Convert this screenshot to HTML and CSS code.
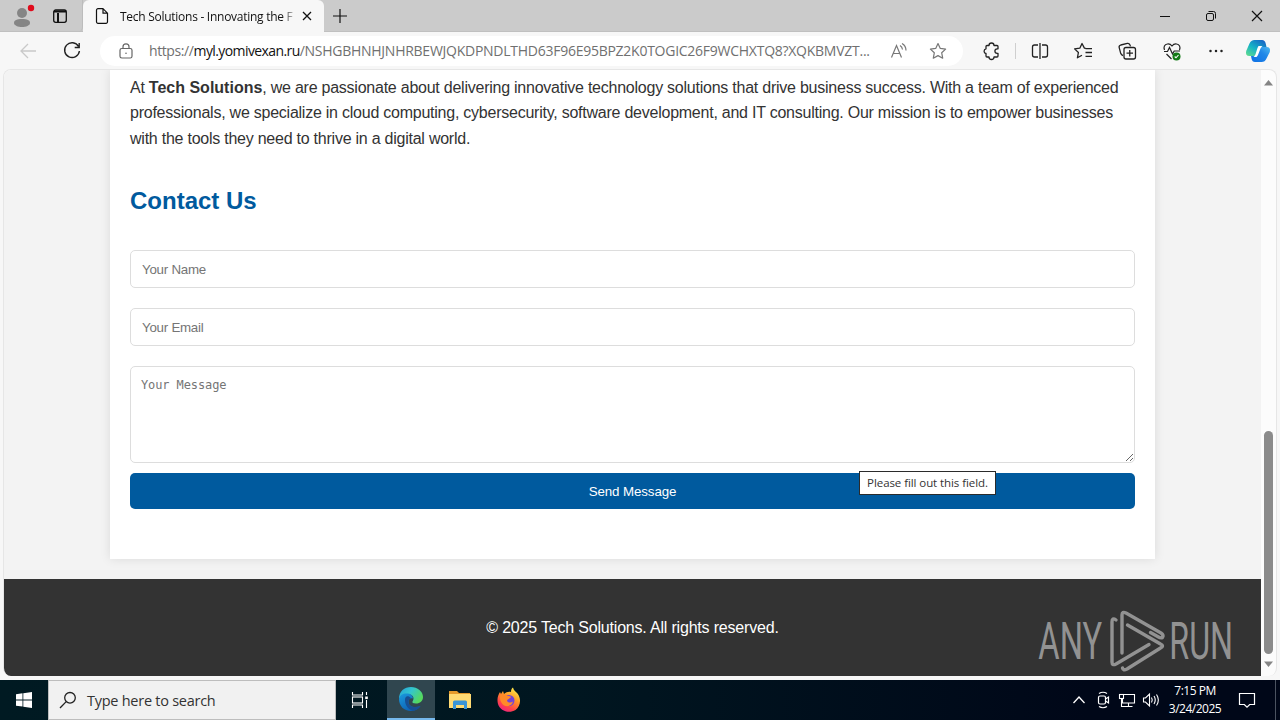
FILE: index.html
```html
<!DOCTYPE html>
<html lang="en">
<head>
    <meta charset="UTF-8">
    <meta name="viewport" content="width=device-width, initial-scale=1.0">
    <title>Tech Solutions - Innovating the Future</title>
    <link rel="stylesheet" href="styles.css">
</head>
<body>

    <!-- Tab strip -->
    <div class="tabstrip">
        <div class="tab-left">
            <svg width="30" height="32" viewBox="0 0 30 32">
                <circle cx="14" cy="13" r="5" fill="#858585"/>
                <path d="M6 23c0-3 3-4 8-4s8 1 8 4c0 2.500-4 4-8 4s-8-1.500-8-4z" fill="#858585"/>
                <circle cx="23" cy="8" r="3.200" fill="#e00b1c"/>
            </svg>
            <svg class="workspaces" width="16" height="16" viewBox="0 0 16 16" fill="none" stroke="#111" stroke-width="1.300">
                <rect x="1.700" y="2" width="12.600" height="12.300" rx="2"/>
                <path d="M2 3.500h12M6 5v9" stroke-width="2"/>
            </svg>
        </div>
        <div class="tab">
            <svg width="14" height="16" viewBox="0 0 14 16" fill="none" stroke="#111" stroke-width="1.200">
                <path d="M8 .7H3a1.500 1.500 0 0 0-1.500 1.500v11.600a1.500 1.500 0 0 0 1.500 1.500h8a1.500 1.500 0 0 0 1.500-1.500V5.200L8 .7v4.500h4.500"/>
            </svg>
            <span class="tab-title">Tech Solutions - Innovating the F</span>
            <svg width="10" height="10" viewBox="0 0 10 10" stroke="#111" stroke-width="1.300"><path d="M1 1l8 8M9 1L1 9"/></svg>
        </div>
        <svg class="plus" width="14" height="14" viewBox="0 0 14 14" stroke="#111" stroke-width="1.200"><path d="M7 0v14M0 7h14"/></svg>
        <div class="window-buttons">
            <svg width="46" height="32" viewBox="0 0 46 32" stroke="#111"><path d="M18 16.500h10"/></svg>
            <svg width="46" height="32" viewBox="0 0 46 32" fill="none" stroke="#111">
                <rect x="18.500" y="13.500" width="7" height="7" rx="1.500"/>
                <path d="M20.500 11.500h5a2 2 0 0 1 2 2v5"/>
            </svg>
            <svg width="46" height="32" viewBox="0 0 46 32" stroke="#111" stroke-width="1.200"><path d="M18 11l10 10M28 11L18 21"/></svg>
        </div>
    </div>

    <!-- Toolbar -->
    <div class="toolbar">
        <svg class="tool" viewBox="0 0 44 38" fill="none" stroke="#c9c9c9" stroke-width="1.300"><path d="M30 19H15M22 12l-7 7 7 7"/></svg>
        <svg class="tool" viewBox="0 0 44 38" fill="none" stroke="#222" stroke-width="1.400">
            <path d="M28.500 14.500A7.400 7.400 0 1 0 29.400 19M29.200 11v4.500h-4.500"/>
        </svg>
        <div class="address">
            <svg width="14" height="16" viewBox="0 0 14 16" fill="none" stroke="#666" stroke-width="1.200">
                <rect x="1" y="5.500" width="12" height="9.500" rx="1.800"/>
                <path d="M4 5.500V3.800a3 3 0 0 1 6 0v1.700"/>
                <circle cx="7" cy="10.200" r=".8" fill="#666" stroke="none"/>
            </svg>
            <span class="url"><span class="scheme">https://</span><b>myl.yomivexan.ru</b>/NSHGBHNHJNHRBEWJQKDPNDLTHD63F96E95BPZ2K0TOGIC26F9WCHXTQ8?XQKBMVZT...</span>
            <svg width="18" height="18" viewBox="0 0 18 18" fill="none" stroke="#777" stroke-width="1.200">
                <path d="M1.500 15.500L6.500 3.500l5 12M3.300 11.500h6.500M10 3.500q2.200 1.300 2.500 4M12 1.500q4 2.200 4 7"/>
            </svg>
            <svg class="star" width="18" height="18" viewBox="0 0 18 18" fill="none" stroke="#777" stroke-width="1.200" stroke-linejoin="round">
                <path d="M9 1.500l2.300 4.900 5.300.7-3.900 3.700 1 5.400L9 13.600l-4.700 2.600 1-5.400-3.900-3.700 5.300-.7z"/>
            </svg>
        </div>
        <svg class="tool ext" viewBox="0 0 44 38" fill="none" stroke="#222" stroke-width="1.300" stroke-linejoin="round">
            <path d="M20 13.500a2.500 2.500 0 0 1 5 0h3q1 0 1 1v2.300h-.8a2.300 2.300 0 0 0 0 4.600h.8v2.600q0 1-1 1h-3a2.500 2.500 0 0 1-5 0h-2q-1 0-1-1v-2.500a2.400 2.400 0 0 1 0-4.700v-2.300q0-1 1-1z"/>
        </svg>
        <div class="divider"></div>
        <svg class="tool" viewBox="0 0 44 38" fill="none" stroke="#222" stroke-width="1.300">
            <path d="M20 13h-3.500q-2 0-2 2v8q0 2 2 2H20M24 13h3.500q2 0 2 2v8q0 2-2 2H24M22 11v16"/>
        </svg>
        <svg class="tool" viewBox="0 0 44 38" fill="none" stroke="#222" stroke-width="1.300" stroke-linejoin="round">
            <path d="M24 16.300l-1.600-.2L20 11.500l-2.200 4.700-5.200.7 3.800 3.600-1 5.300 4.600-2.500M23.500 16.700H30M23.500 20.500H30M23.500 24.300H30"/>
        </svg>
        <svg class="tool" viewBox="0 0 44 38" fill="none" stroke="#222" stroke-width="1.300">
            <path d="M17 23.500c-1.500-.3-1.900-1-2.300-2.200l-1.500-5.600c-.4-1.500.2-2.300 1.600-2.700l6.500-1.600c1.500-.3 2.500.5 2.900 2l.3 1"/>
            <rect x="18" y="15.500" width="11.500" height="11.500" rx="2"/>
            <path d="M23.750 18v6.500M20.500 21.200H27"/>
        </svg>
        <svg class="tool" viewBox="0 0 44 38" fill="none" stroke="#222" stroke-width="1.200">
            <path d="M14.500 18c-1.200-3 0-5.500 3-6 2-.3 3.500.7 4.500 2 1-1.300 2.500-2.300 4.500-2 3 .5 4.200 3 3 6M16.500 22l5 5M14 19.500h3.500l2-4 3 6.500 1.700-3H30"/>
            <circle cx="26.500" cy="24.500" r="4" fill="#137a16" stroke="none"/>
            <path d="M24.700 24.500l1.300 1.300 2.500-2.800" stroke="#fff" stroke-width="1.100"/>
        </svg>
        <svg class="tool" viewBox="0 0 44 38" fill="#222">
            <circle cx="16.500" cy="19" r="1.250"/><circle cx="22" cy="19" r="1.250"/><circle cx="27.500" cy="19" r="1.250"/>
        </svg>
        <svg class="copilot" width="26" height="26" viewBox="0 0 26 26">
            <defs>
                <linearGradient id="cpA" x1="0" y1="1" x2=".8" y2="0"><stop offset="0" stop-color="#65df8a"/><stop offset=".5" stop-color="#16b3c6"/><stop offset="1" stop-color="#1765c6"/></linearGradient>
                <linearGradient id="cpB" x1="0" y1="1" x2="1" y2="0"><stop offset="0" stop-color="#0d6fe5"/><stop offset=".6" stop-color="#2188e8"/><stop offset="1" stop-color="#4eb9ef"/></linearGradient>
            </defs>
            <path d="M9.500 2H17q3 0 3.700 3.500L21.500 9H17q-2.500 0-3.500 3l-1.700 4q-1 2-3 2H4.500q-4.500 0-3.300-5L4.500 5.500Q6 2 9.500 2z" fill="url(#cpA)"/>
            <path d="M17 9h4.500q4.500 0 3.300 5L21.500 20.500Q20 24 16.500 24H10q-2.800 0-3.500-3.500L6 18h3q2.500 0 3.500-3l1.500-4q.8-2 3-2z" fill="url(#cpB)"/>
            <path d="M13.500 8h4q-1.500 1-2.200 3l-2.100 5.500q-.7 1.500-1.700 2.500h-3q1.500-1 2.100-3l1.700-5.500q.4-1.500 1.200-2.500z" fill="#fff"/>
        </svg>
    </div>

    <!-- Page -->
    <div class="viewport">
        <div class="page">
            <main class="container">
                <p>At <strong>Tech Solutions</strong>, we are passionate about delivering innovative technology solutions that drive business success. With a team of experienced<br>professionals, we specialize in cloud computing, cybersecurity, software development, and IT consulting. Our mission is to empower businesses<br>with the tools they need to thrive in a digital world.</p>
                <h2>Contact Us</h2>
                <form>
                    <input type="text" placeholder="Your Name">
                    <input type="email" placeholder="Your Email">
                    <textarea placeholder="Your Message"></textarea>
                    <button type="button">Send Message</button>
                </form>
            </main>
            <footer>© 2025 Tech Solutions. All rights reserved.</footer>
        </div>
        <div class="scrollbar">
            <svg width="9" height="6" viewBox="0 0 9 6"><path d="M0 5.500L4.500 0 9 5.500z" fill="#858585"/></svg>
            <div class="thumb"></div>
            <svg width="9" height="6" viewBox="0 0 9 6"><path d="M0 .5h9L4.500 6z" fill="#858585"/></svg>
        </div>
        <div class="tooltip">Please fill out this field.</div>
        <svg class="watermark" width="200" height="64" viewBox="0 0 200 64">
            <g class="watermark-text">
                <text x="4" y="51" textLength="108" lengthAdjust="spacingAndGlyphs" transform="scale(.59 1)">ANY</text>
                <text x="226" y="51" textLength="108" lengthAdjust="spacingAndGlyphs" transform="scale(.59 1)">RUN</text>
            </g>
            <g fill="none" stroke="#929292" stroke-width="3.400" stroke-linejoin="round" stroke-linecap="round">
                <path d="M86 45V7q0-4 4-2l35 20q3 2 1.500 4.500-1.500 1-4-.5l-8-4.500"/>
                <path d="M91.500 17l33 19q4 2 0 4L91 61q-4 2-4.500-1"/>
                <path d="M80 12q-4-3-4 2v40q0 4 4 2l33-19.500"/>
            </g>
        </svg>
    </div>

    <!-- Taskbar -->
    <div class="taskbar">
        <div class="start">
            <svg width="16" height="16" viewBox="0 0 16 16" fill="#fff"><path d="M0 2.200l6.500-.9v6.200H0zM7.300 1.200L16 0v7.500H7.300zM0 8.400h6.500v6.200L0 13.700zM7.300 8.400H16V16l-8.700-1.200z"/></svg>
        </div>
        <div class="search">
            <svg width="18" height="18" viewBox="0 0 18 18" fill="none" stroke="#222" stroke-width="1.300"><circle cx="11" cy="6.800" r="5.300"/><path d="M7.200 10.600L1 17"/></svg>
            <span>Type here to search</span>
        </div>
        <div class="app task-view">
            <svg width="18" height="18" viewBox="0 0 18 18" fill="none" stroke="#fff" stroke-width="1.100">
                <path d="M1.500 1v3h10V1M1.500 17v-3h10v3M15.500 1v3M15.500 9v8"/>
                <rect x="1.500" y="6" width="10" height="6"/>
                <rect x="14.200" y="5.500" width="2.600" height="2.600" fill="#fff" stroke="none"/>
            </svg>
        </div>
        <div class="app active">
            <svg width="26" height="26" viewBox="0 0 26 26">
                <defs>
                    <linearGradient id="edA" x1="0" y1="0" x2="1" y2=".5"><stop offset="0" stop-color="#249fd8"/><stop offset=".5" stop-color="#33c5cf"/><stop offset="1" stop-color="#55d95e"/></linearGradient>
                    <linearGradient id="edB" x1="0" y1="0" x2=".7" y2="1"><stop offset="0" stop-color="#1b9ade"/><stop offset="1" stop-color="#0b5baf"/></linearGradient>
                </defs>
                <path d="M1 13C1 5 6.500 1 13 1s12 4.500 12 10c0 4-3 6.500-7 6.500-3 0-4-1-3.500-2 1.500-2 1.500-5-1-6.500C9 6.500 3 8.500 1 13z" fill="url(#edA)"/>
                <path d="M1 13c1-5 5-6 9-5.500 3 .4 5 2.500 5 5-3-1-5 1-4.500 4 .5 4 6 6 12 3.500C20 23.500 17 25 13 25 6 25 1 20 1 13z" fill="url(#edB)"/>
                <path d="M7 14c0 6 4 10 8 10.800 3-.4 6-2.300 7.500-4.800-6 2.500-11.500.5-12-3.500-.3-2.500 1-4 2.500-4.300C10 9 7 10 7 14z" fill="#174f94"/>
            </svg>
        </div>
        <div class="app">
            <svg width="24" height="22" viewBox="0 0 24 22">
                <path d="M1 2h8l2 2h11v14H1z" fill="#e59a2b"/>
                <path d="M1 5h22v14H1z" fill="#ffda73"/>
                <path d="M5 20v-7q0-1.500 1.500-1.500h11q1.500 0 1.500 1.500v7h-3v-4H8v4z" fill="#3a94d6"/>
            </svg>
        </div>
        <div class="app">
            <svg width="26" height="26" viewBox="0 0 26 26">
                <defs>
                    <linearGradient id="ffA" x1=".8" y1="0" x2=".25" y2="1"><stop offset="0" stop-color="#fff34f"/><stop offset=".4" stop-color="#ff9a26"/><stop offset=".75" stop-color="#ff4349"/><stop offset="1" stop-color="#ee2183"/></linearGradient>
                </defs>
                <path d="M15 5c0-2 .5-3.500 2-4.500.5 3 3 4 4.500 6 4.500 6 2.500 13-2 16.500C13 27 4 24 2 17 .7 12 2 8 4 5l1 2 2-3 1 3c2-1.500 4-2.500 7-2z" fill="url(#ffA)"/>
                <circle cx="13" cy="13.500" r="5.500" fill="#7344d8"/>
                <path d="M4.500 8c3-1.500 5-.5 7 1 1.500 0 3 .2 3.500 1-1 2-3.500 1.500-4 3.500.5 2.500 4 2.500 6 1-1 5-8 6.500-11 2-2-3-2.500-6-1.500-8.500z" fill="#ff8b28"/>
            </svg>
        </div>
        <div class="tray">
            <svg width="24" height="24" viewBox="0 0 24 24" fill="none" stroke="#fff" stroke-width="1.300"><path d="M6.500 15l5.500-6 5.500 6"/></svg>
            <svg width="24" height="24" viewBox="0 0 24 24" fill="none" stroke="#fff" stroke-width="1.200">
                <rect x="7.500" y="8" width="7" height="8" rx="1.500"/>
                <path d="M14.500 11l3-2v6l-3-2M8 5.500q4-2.500 8 0M8 18.500q4 2.500 8 0"/>
            </svg>
            <svg width="24" height="24" viewBox="0 0 24 24" fill="none" stroke="#fff" stroke-width="1.100">
                <path d="M9 6.500h10.500v8.500H7.500v-4M13.500 15v3M9.500 18.500h8M6.500 11v7.500h3"/>
                <rect x="4.500" y="6.500" width="4" height="4"/>
            </svg>
            <svg width="24" height="24" viewBox="0 0 24 24" fill="none" stroke="#fff" stroke-width="1.100">
                <path d="M4.500 10h2l4-4v12l-4-4h-2zM12.500 9.500q1.500 2.500 0 5M15 8q2.500 4 0 8M17.500 6.500q3.700 5.500 0 11"/>
            </svg>
            <div class="clock">7:15 PM<br>3/24/2025</div>
            <svg class="notify" width="18" height="18" viewBox="0 0 18 18" fill="none" stroke="#fff" stroke-width="1.200"><path d="M1.500 2.500h15v11h-4.800L9 16.200l-2.700-2.700H1.500z"/></svg>
            <div class="show-desktop"></div>
        </div>
    </div>

</body>
</html>
```
FILE: styles.css
```css
* {
    box-sizing: border-box;
}
body {
    margin: 0;
    width: 1280px;
    height: 720px;
    overflow: hidden;
    display: flex;
    flex-direction: column;
    background-color: #f7f7f7;
    font-family: "Open Sans", "Noto Sans", sans-serif;
}
svg {
    display: block;
    flex: none;
}

/* Tab strip */
.tabstrip {
    display: flex;
    align-items: center;
    height: 32px;
    flex: none;
    background-color: #cbcbcb;
    border-bottom: 1px solid #c0c0c0;
}
.tab-left {
    display: flex;
    align-items: center;
    width: 83px;
    height: 32px;
    padding-left: 8px;
    border-right: 1px solid #bcbcbc;
    border-bottom-right-radius: 5px;
}
.workspaces {
    margin-left: 14px;
}
.tab {
    display: flex;
    align-items: center;
    width: 241px;
    height: 33px;
    padding: 0 11px 0 12px;
    margin-bottom: -1px;
    background-color: #f7f7f7;
    border-radius: 6px 6px 0 0;
}
.tab-title {
    width: 176px;
    margin: 0 6px 0 11px;
    white-space: nowrap;
    font-size: 12px;
    letter-spacing: -0.27px;
    color: #111;
    mask-image: linear-gradient(to right, #000 162px, transparent 177px);
}
.plus {
    margin-left: 9px;
}
.window-buttons {
    display: flex;
    margin-left: auto;
}

/* Toolbar */
.toolbar {
    display: flex;
    align-items: center;
    height: 37px;
    flex: none;
    padding-left: 6px;
    background-color: #f7f7f7;
}
.tool {
    width: 44px;
    height: 38px;
}
.address {
    display: flex;
    align-items: center;
    width: 863px;
    height: 30px;
    margin-left: 6px;
    padding-left: 19px;
    border-radius: 15px;
    background-color: #fff;
}
.url {
    width: 723px;
    margin: 0 18px 0 16px;
    white-space: nowrap;
    font-size: 14px;
    letter-spacing: -0.26px;
    color: #707070;
}
.url .scheme {
    letter-spacing: -0.4px;
}
.url b {
    font-weight: 400;
    letter-spacing: -0.6px;
    color: #111;
}
.star {
    margin-left: 21px;
}
.ext {
    margin-left: 6px;
}
.divider {
    width: 1px;
    height: 16px;
    margin: 0 2px;
    background-color: #cfcfcf;
}
.copilot {
    margin-left: 7px;
}

/* Page */
.viewport {
    position: relative;
    display: flex;
    width: 1274px;
    height: 607px;
    margin: 0 3px 4px;
    flex: none;
    overflow: hidden;
    border: 1px solid #e6e6e6;
    border-width: 1px 1px 0;
    border-radius: 8px;
    background-color: #fcfcfc;
}
.page {
    width: 1257px;
    flex: none;
    background-color: #f3f3f3;
    font-family: "Liberation Sans", Arial, sans-serif;
}
.container {
    width: 1045px;
    height: 489px;
    margin: 0 auto 20px;
    padding: 4.5px 20px 0;
    background-color: #fff;
    box-shadow: 0 0 10px rgba(0, 0, 0, 0.1);
}
p {
    margin: 0;
    font-size: 16px;
    line-height: 25.6px;
    letter-spacing: -0.24px;
    white-space: nowrap;
    color: #333;
}
p strong {
    letter-spacing: 0;
}
h2 {
    margin: 30.5px 0 0;
    font-size: 24px;
    line-height: 38px;
    color: #005a9e;
}
form {
    display: flex;
    flex-direction: column;
    margin-top: 30px;
}
input, textarea {
    width: 100%;
    padding: 11px 10px 9px 11px;
    border: 1px solid #ddd;
    border-radius: 5px;
    background-color: #fff;
}
input {
    height: 38px;
    margin-bottom: 20px;
    font-family: "Liberation Sans", Arial, sans-serif;
    font-size: 13.333px;
    letter-spacing: -0.25px;
}
textarea {
    height: 97px;
    margin-bottom: 10px;
    padding-left: 10px;
    font-family: "DejaVu Sans Mono", monospace;
    font-size: 12px;
    letter-spacing: -0.1px;
}
input::placeholder, textarea::placeholder {
    color: #757575;
}
button {
    height: 36px;
    padding: 2px 0 0;
    border: none;
    border-radius: 5px;
    background-color: #005a9e;
    color: #fff;
    font-family: "Liberation Sans", Arial, sans-serif;
    font-size: 13.333px;
    letter-spacing: -0.1px;
}
footer {
    height: 97px;
    background-color: #333;
    color: #fff;
    font-size: 16px;
    line-height: 97px;
    letter-spacing: -0.19px;
    text-align: center;
}
.scrollbar {
    display: flex;
    flex-direction: column;
    align-items: center;
    width: 15px;
    padding: 10px 0 9px;
}
.thumb {
    width: 9px;
    height: 223px;
    margin: auto 0 7px;
    border-radius: 5px;
    background-color: #8b8b8b;
}
.tooltip {
    position: absolute;
    left: 855px;
    top: 401px;
    width: 137px;
    height: 24px;
    border: 1px solid #2b2b2b;
    background-color: #fff;
    color: #333;
    font-size: 11.5px;
    line-height: 22px;
    letter-spacing: -0.08px;
    text-align: center;
    white-space: nowrap;
}
.watermark {
    position: absolute;
    left: 1032px;
    top: 538px;
}
.watermark-text {
    font-family: Roboto, sans-serif;
    font-size: 52px;
    fill: #929292;
}

/* Taskbar */
.taskbar {
    display: flex;
    height: 40px;
    flex: none;
    background: linear-gradient(to right, #001a22, #001620 45%, #000718 85%);
}
.start, .app {
    display: flex;
    align-items: center;
    justify-content: center;
    width: 48px;
}
.search {
    display: flex;
    align-items: center;
    gap: 10px;
    width: 288px;
    padding-left: 10px;
    border: 1px solid #bdbdbd;
    background-color: #f1f1f1;
    color: #333;
    font-size: 14.5px;
    letter-spacing: -0.26px;
}
.app {
    width: 49px;
}
.app.task-view {
    padding-right: 2px;
}
.app.active {
    width: 48px;
    margin: 0 0 0 2px;
    background-color: #30464f;
    border-bottom: 2px solid #76b9ed;
}
.tray {
    display: flex;
    align-items: center;
    margin-left: auto;
    color: #fff;
}
.clock {
    width: 64px;
    font-size: 12px;
    line-height: 18px;
    letter-spacing: -0.5px;
    text-align: center;
}
.notify {
    margin: 0 19px 0 11px;
}
.show-desktop {
    width: 5px;
    height: 40px;
    border-left: 1px solid #4b5360;
}
```
